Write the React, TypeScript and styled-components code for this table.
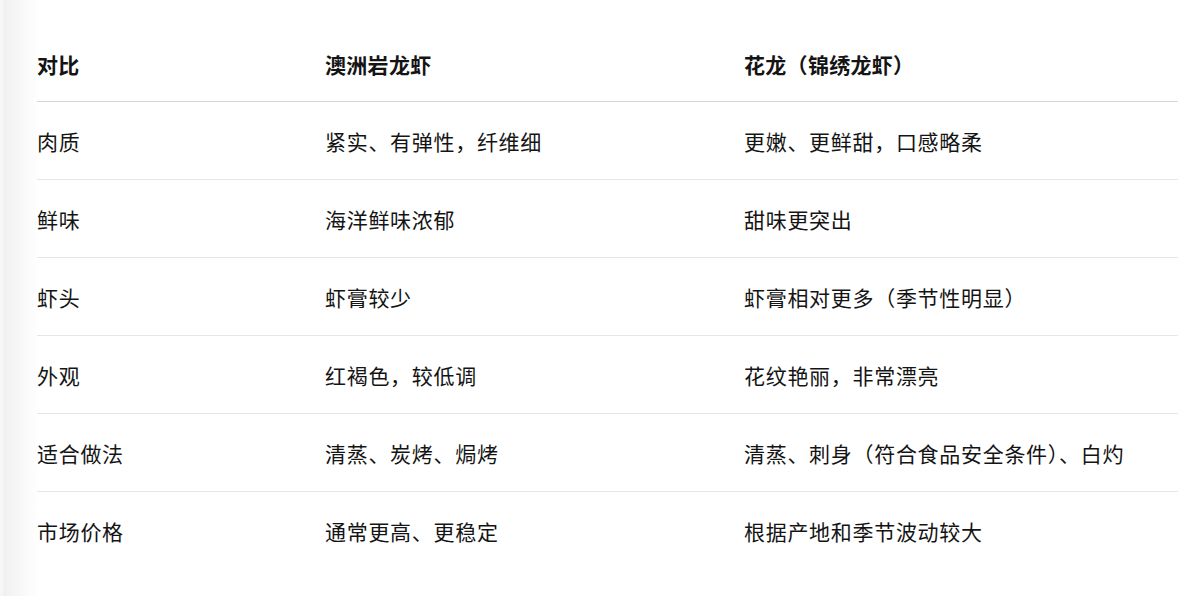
import React from "react";
import styled, { createGlobalStyle } from "styled-components";

const GlobalStyle = createGlobalStyle`
  html, body { margin: 0; padding: 0; background: #ffffff; }
  body {
    font-family: "Noto Sans CJK SC", "Noto Sans", sans-serif;
    color: #141414;
  }
`;

const Page = styled.div`
  width: 1178px;
  height: 596px;
  box-sizing: border-box;
  padding: 27px 0 0 37px;
  background: linear-gradient(
    to right,
    #f6f6f6 0px,
    #f6f6f6 3px,
    #f0f0f0 4px,
    #f5f5f5 14px,
    #fafafa 26px,
    #ffffff 40px
  );
  overflow: hidden;
`;

const Table = styled.table`
  width: 100%;
  border-collapse: collapse;
  table-layout: fixed;
  font-size: 21px;
  letter-spacing: 0.7px;
`;

const Col = styled.col<{ $w?: number }>`
  width: ${(p) => (p.$w ? `${p.$w}px` : "auto")};
`;

const HeadCell = styled.th`
  text-align: left;
  font-weight: 700;
  height: 74px;
  padding: 0;
  vertical-align: middle;
  border-bottom: 1px solid #d6d6d6;
  line-height: 28px;
  letter-spacing: 0.3px;
`;

const Row = styled.tr<{ $last?: boolean }>`
  border-bottom: ${(p) => (p.$last ? "none" : "1px solid #e6e6e6")};
`;

const Cell = styled.td`
  height: 78px;
  padding: 0;
  padding-top: 1px;
  box-sizing: border-box;
  vertical-align: middle;
  font-weight: 400;
  line-height: 28px;
`;

const head = ["对比", "澳洲岩龙虾", "花龙（锦绣龙虾）"];
const rows = [
  ["肉质", "紧实、有弹性，纤维细", "更嫩、更鲜甜，口感略柔"],
  ["鲜味", "海洋鲜味浓郁", "甜味更突出"],
  ["虾头", "虾膏较少", "虾膏相对更多（季节性明显）"],
  ["外观", "红褐色，较低调", "花纹艳丽，非常漂亮"],
  ["适合做法", "清蒸、炭烤、焗烤", "清蒸、刺身（符合食品安全条件）、白灼"],
  ["市场价格", "通常更高、更稳定", "根据产地和季节波动较大"],
];

export default function App() {
  return (
    <>
      <GlobalStyle />
      <Page>
        <Table>
          <colgroup>
            <Col $w={288} />
            <Col $w={419} />
            <Col />
          </colgroup>
          <thead>
            <tr>
              {head.map((h) => (
                <HeadCell key={h}>{h}</HeadCell>
              ))}
            </tr>
          </thead>
          <tbody>
            {rows.map((r, i) => (
              <Row key={r[0]} $last={i === rows.length - 1}>
                {r.map((c, j) => (
                  <Cell key={j}>{c}</Cell>
                ))}
              </Row>
            ))}
          </tbody>
        </Table>
      </Page>
    </>
  );
}
